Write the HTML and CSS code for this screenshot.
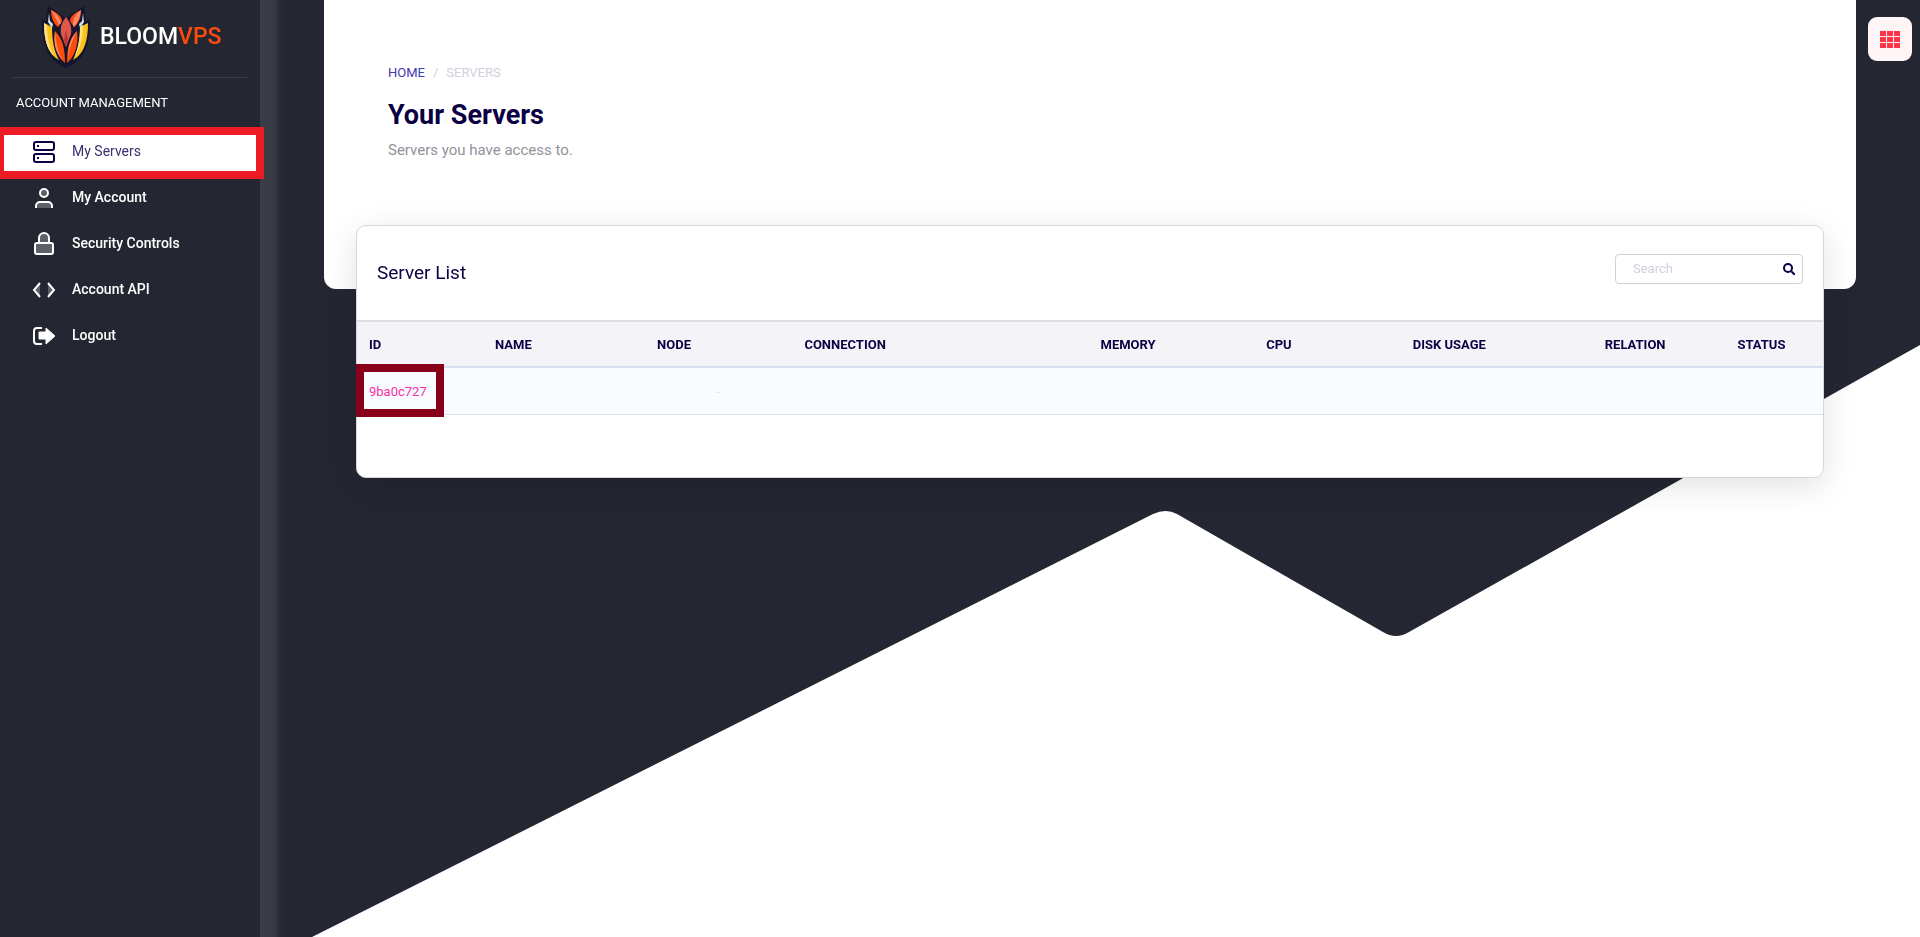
FILE: index.html
```html
<!DOCTYPE html>
<html lang="en">
<head>
<meta charset="utf-8">
<title>BloomVPS - Your Servers</title>
<link rel="stylesheet" href="styles.css">
</head>
<body>
<svg class="backdrop" viewBox="0 0 1920 937" preserveAspectRatio="none" aria-hidden="true">
  <path fill="#242731" d="M0 0H1920V345L1409 632Q1396 640 1383 632L1177 514Q1166 508 1153 514L312 937H0Z"/>
</svg>
<div class="layout">
  <aside class="sidebar">
    <a class="brand" href="#">
      <svg class="brand-mark" viewBox="0 0 52 64" aria-hidden="true">
        <path fill="#14162f" d="M8 1L14 5L26 13L38 5L44 1L46 17L50 14C50 40 46 54 26 63C6 54 2 40 2 14L6 17Z"/>
        <path fill="#fbc21b" d="M4 18L12 22C12 35 14 46 19 55C8 49 4 36 4 18Z"/>
        <path fill="#ffe080" d="M4 18L7 20C7 34 10 44 15 52C7 45 4 34 4 18Z"/>
        <path fill="#fbc21b" d="M48 18L40 22C40 35 38 46 33 55C44 49 48 36 48 18Z"/>
        <path fill="#ffe080" d="M40 22L43 20C43 34 40 44 34 53C38 43 40 34 40 22Z"/>
        <path fill="#cfe0ea" d="M9 8L10 16L13 19L12 23L8 17ZM43 8L42 16L39 19L40 23L44 17Z"/>
        <path fill="#fc4c0c" d="M11 5C18 8 22 12 22 16L18 22C13 18 11 12 11 5Z"/>
        <path fill="#f78a6c" d="M11 5C17 9 20 13 21 18L19 20C16 13 13 9 11 5Z"/>
        <path fill="#fc4c0c" d="M41 5C34 8 30 12 30 16L34 22C39 18 41 12 41 5Z"/>
        <path fill="#f78a6c" d="M41 5C36 9 33 13 33 20L34 22C38 17 40 12 41 5Z"/>
        <path fill="#dd5848" d="M26 12C30 17 32 22 31 29L26 42L21 29C20 22 22 17 26 12Z"/>
        <path fill="#b93538" d="M26 25L28 35L26 42L24 35Z"/>
        <path fill="#fc4c0c" d="M15 26C22 33 25 42 25 58C17 51 13 39 15 26Z"/>
        <path fill="#f78a6c" d="M15 26C16 39 18 48 23 56C16 48 13 39 15 26Z"/>
        <path fill="#fc4c0c" d="M37 26C30 33 27 42 27 58C35 51 39 39 37 26Z"/>
        <path fill="#f78a6c" d="M37 26C30 34 28 42 28 54C29 43 33 34 37 26Z"/>
      </svg>
      <span class="brand-name">BLOOM<span class="brand-accent">VPS</span></span>
    </a>
    <h2 class="nav-heading">ACCOUNT MANAGEMENT</h2>
    <nav class="nav">
      <a class="nav-link active" href="#">
        <svg viewBox="0 0 24 24" fill="none" stroke="currentColor" stroke-width="2" aria-hidden="true"><rect x="2" y="3" width="20" height="8" rx="2"/><rect x="2" y="15" width="20" height="8" rx="2"/><path d="M5 7h2M5 19h2"/></svg>
        <span>My Servers</span>
      </a>
      <a class="nav-link" href="#">
        <svg viewBox="0 0 24 24" fill="none" stroke="currentColor" stroke-width="2" aria-hidden="true"><circle cx="12" cy="8" r="4" fill="#5c6069"/><path fill="#5c6069" d="M4 23v-2a4 4 0 0 1 4-4h8a4 4 0 0 1 4 4v2"/></svg>
        <span>My Account</span>
      </a>
      <a class="nav-link" href="#">
        <svg viewBox="0 0 24 24" fill="none" stroke="currentColor" stroke-width="2" aria-hidden="true"><path fill="#5c6069" d="M7 12V7a5 5 0 0 1 10 0v5"/><rect fill="#5c6069" x="3" y="12" width="18" height="11" rx="2"/></svg>
        <span>Security Controls</span>
      </a>
      <a class="nav-link" href="#">
        <svg viewBox="0 0 24 24" fill="none" stroke="currentColor" stroke-width="2" aria-hidden="true"><path fill="#5c6069" d="M8 6l-6 7 6 7M16 6l6 7-6 7"/></svg>
        <span>Account API</span>
      </a>
      <a class="nav-link" href="#">
        <svg viewBox="0 0 24 24" fill="none" stroke="currentColor" stroke-width="2" aria-hidden="true"><path d="M10 5H5a3 3 0 0 0-3 3v10a3 3 0 0 0 3 3h5"/><path fill="currentColor" stroke-width="1" stroke-linejoin="round" d="M7 9h7V5l9 8-9 8v-5H7z"/></svg>
        <span>Logout</span>
      </a>
    </nav>
  </aside>
  <main class="main">
    <header class="page-head">
      <nav class="crumbs" aria-label="Breadcrumb"><a href="#">HOME</a><span>/</span><span>SERVERS</span></nav>
      <h1 class="page-title">Your Servers</h1>
      <p class="page-sub">Servers you have access to.</p>
    </header>
    <section class="card">
      <div class="card-head">
        <h3 class="card-title">Server List</h3>
        <form class="search">
          <input type="text" placeholder="Search" aria-label="Search">
          <button type="submit" aria-label="Submit search"><svg viewBox="0 0 12 12" fill="none" stroke="currentColor" stroke-width="2" aria-hidden="true"><circle cx="5" cy="5" r="4"/><path d="M8 8l4 4"/></svg></button>
        </form>
      </div>
      <table class="servers">
        <colgroup><col class="c-id"><col class="c-name"><col class="c-node"><col class="c-conn"><col class="c-mem"><col class="c-cpu"><col class="c-disk"><col class="c-rel"><col class="c-status"></colgroup>
        <thead>
          <tr><th>ID</th><th>NAME</th><th>NODE</th><th>CONNECTION</th><th>MEMORY</th><th>CPU</th><th>DISK USAGE</th><th>RELATION</th><th>STATUS</th></tr>
        </thead>
        <tbody>
          <tr><td class="id-cell"><a href="#">9ba0c727</a></td><td></td><td class="node-cell"><i class="dot"></i></td><td></td><td></td><td></td><td></td><td></td><td></td></tr>
        </tbody>
      </table>
    </section>
  </main>
  <div class="tools">
    <button class="apps" type="button" aria-label="Apps">
      <svg viewBox="0 0 20 17" fill="currentColor" aria-hidden="true"><path d="M0 0h6v5H0zM7 0h6v5H7zM14 0h6v5h-6zM0 6h6v5H0zM7 6h6v5H7zM14 6h6v5h-6zM0 12h6v5H0zM7 12h6v5H7zM14 12h6v5h-6z"/></svg>
    </button>
  </div>
</div>
</body>
</html>
```
FILE: styles.css
```css
*,
*::before,
*::after {
  box-sizing: border-box;
}

body {
  margin: 0;
  background: #fff;
  color: #0c0044;
  font-family: Roboto, "Liberation Sans", sans-serif;
  font-size: 14px;
}

h1, h2, h3, p {
  margin: 0;
}

a {
  text-decoration: none;
}

.backdrop {
  position: fixed;
  inset: 0;
  width: 100%;
  height: 100%;
  z-index: -1;
}

.layout {
  display: flex;
  min-height: 100vh;
}

/* Sidebar */
.sidebar {
  position: relative;
  flex: 0 0 260px;
  background: #242731;
}

.sidebar::after {
  content: "";
  position: absolute;
  top: 0;
  bottom: 0;
  left: 100%;
  width: 26px;
  background: linear-gradient(to right, #3b3e48 0, #383b45 14px, #282b35 20px, #242731 26px);
}

.brand {
  display: flex;
  align-items: center;
  gap: 8px;
  height: 78px;
  margin: 0 13px;
  padding: 0 0 4px 27px;
  border-bottom: 1px solid #3b3e48;
}

.brand-mark {
  width: 52px;
  height: 64px;
}

.brand-name {
  color: #fff;
  font-size: 23px;
  line-height: 28px;
  font-weight: 500;
}

.brand-accent {
  color: #fc4c0c;
}

.nav-heading {
  padding: 17px 16px;
  color: #fff;
  font-size: 13px;
  line-height: 16px;
  font-weight: 400;
}

.nav-link {
  position: relative;
  display: flex;
  align-items: center;
  gap: 16px;
  height: 46px;
  padding-left: 32px;
  color: #fff;
  font-weight: 500;
}

.nav-link svg {
  width: 24px;
  height: 24px;
}

.nav-link.active {
  background: #fff;
  color: #0c0044;
  font-weight: 400;
}

.nav-link.active span {
  color: #3c2f70;
}

.nav-link.active::after {
  content: "";
  position: absolute;
  inset: -1px -4px -5px 0;
  z-index: 1;
  border: 8px solid #ed1c24;
  border-left-width: 4px;
}

/* Main column */
.main {
  flex: 1;
  min-width: 0;
  padding: 0 0 48px 64px;
}

.page-head {
  height: 289px;
  padding: 64px;
  border-radius: 0 0 12px 12px;
  background: #fff;
}

.crumbs {
  display: flex;
  gap: 8px;
  color: #d1d0dc;
  font-size: 13px;
  line-height: 18px;
}

.crumbs a {
  color: #4636b0;
}

.page-title {
  margin-top: 15px;
  font-size: 27px;
  line-height: 36px;
  font-weight: 700;
}

.page-sub {
  margin-top: 5px;
  color: #92929b;
  font-size: 15px;
  line-height: 24px;
  font-weight: 400;
}

.card {
  position: relative;
  margin: -64px 32px 0;
  padding-bottom: 62px;
  border: 1px solid #d6d6df;
  border-radius: 10px;
  background: #fff;
  box-shadow: 0 8px 32px rgba(0, 0, 0, 0.12);
}

.card-head {
  display: flex;
  justify-content: space-between;
  align-items: flex-start;
  padding: 28px 20px 32px;
}

.card-title {
  padding-top: 4px;
  font-size: 19px;
  line-height: 30px;
  font-weight: 400;
}

.search {
  display: flex;
  align-items: center;
  width: 188px;
  height: 30px;
  border: 1px solid #d1d0dc;
  border-radius: 4px;
}

.search input {
  flex: 1;
  min-width: 0;
  padding: 0 0 0 17px;
  border: 0;
  outline: 0;
  background: none;
  color: #0c0044;
  font: 13px/18px Roboto, sans-serif;
}

.search input::placeholder {
  color: #d1d0dc;
}

.search button {
  display: flex;
  padding: 0 7px;
  border: 0;
  background: none;
  color: #0c0044;
}

.search svg {
  width: 12px;
  height: 12px;
}

/* Server table */
.servers {
  width: 100%;
  table-layout: fixed;
  border-collapse: separate;
  border-spacing: 0;
}

.c-id { width: 8.6%; }
.c-name { width: 11.05%; }
.c-node { width: 10.05%; }
.c-conn { width: 20.2%; }
.c-mem { width: 11.3%; }
.c-cpu { width: 10%; }
.c-disk { width: 13.1%; }
.c-rel { width: 9.05%; }
.c-status { width: 6.65%; }

.servers th {
  height: 48px;
  padding: 0 12px;
  border-top: 2px solid #dddde6;
  border-bottom: 2px solid #dadff0;
  background: #f4f3f8;
  font-size: 13px;
  font-weight: 700;
  text-align: left;
}

.servers td {
  position: relative;
  height: 47px;
  padding: 0 12px;
  border-bottom: 1px solid #dadff0;
  background: #f9fbff;
}

.id-cell a {
  color: #f72fa2;
  font-size: 13px;
}

.id-cell::after {
  content: "";
  position: absolute;
  top: -4px;
  left: -1px;
  width: 88px;
  height: 53px;
  border: 8px solid #880019;
  pointer-events: none;
}

.servers .node-cell {
  text-align: center;
}

.dot {
  display: inline-block;
  width: 1px;
  height: 1px;
  background: #b9bac4;
  vertical-align: middle;
}

.tools {
  flex: 0 0 64px;
  padding: 17px 8px 0 12px;
}

.apps {
  display: flex;
  align-items: center;
  justify-content: center;
  width: 44px;
  height: 44px;
  padding: 0;
  border: 0;
  border-radius: 9px;
  background: #fff5f6;
  color: #ff3448;
}

.apps svg {
  width: 20px;
  height: 17px;
}
```
